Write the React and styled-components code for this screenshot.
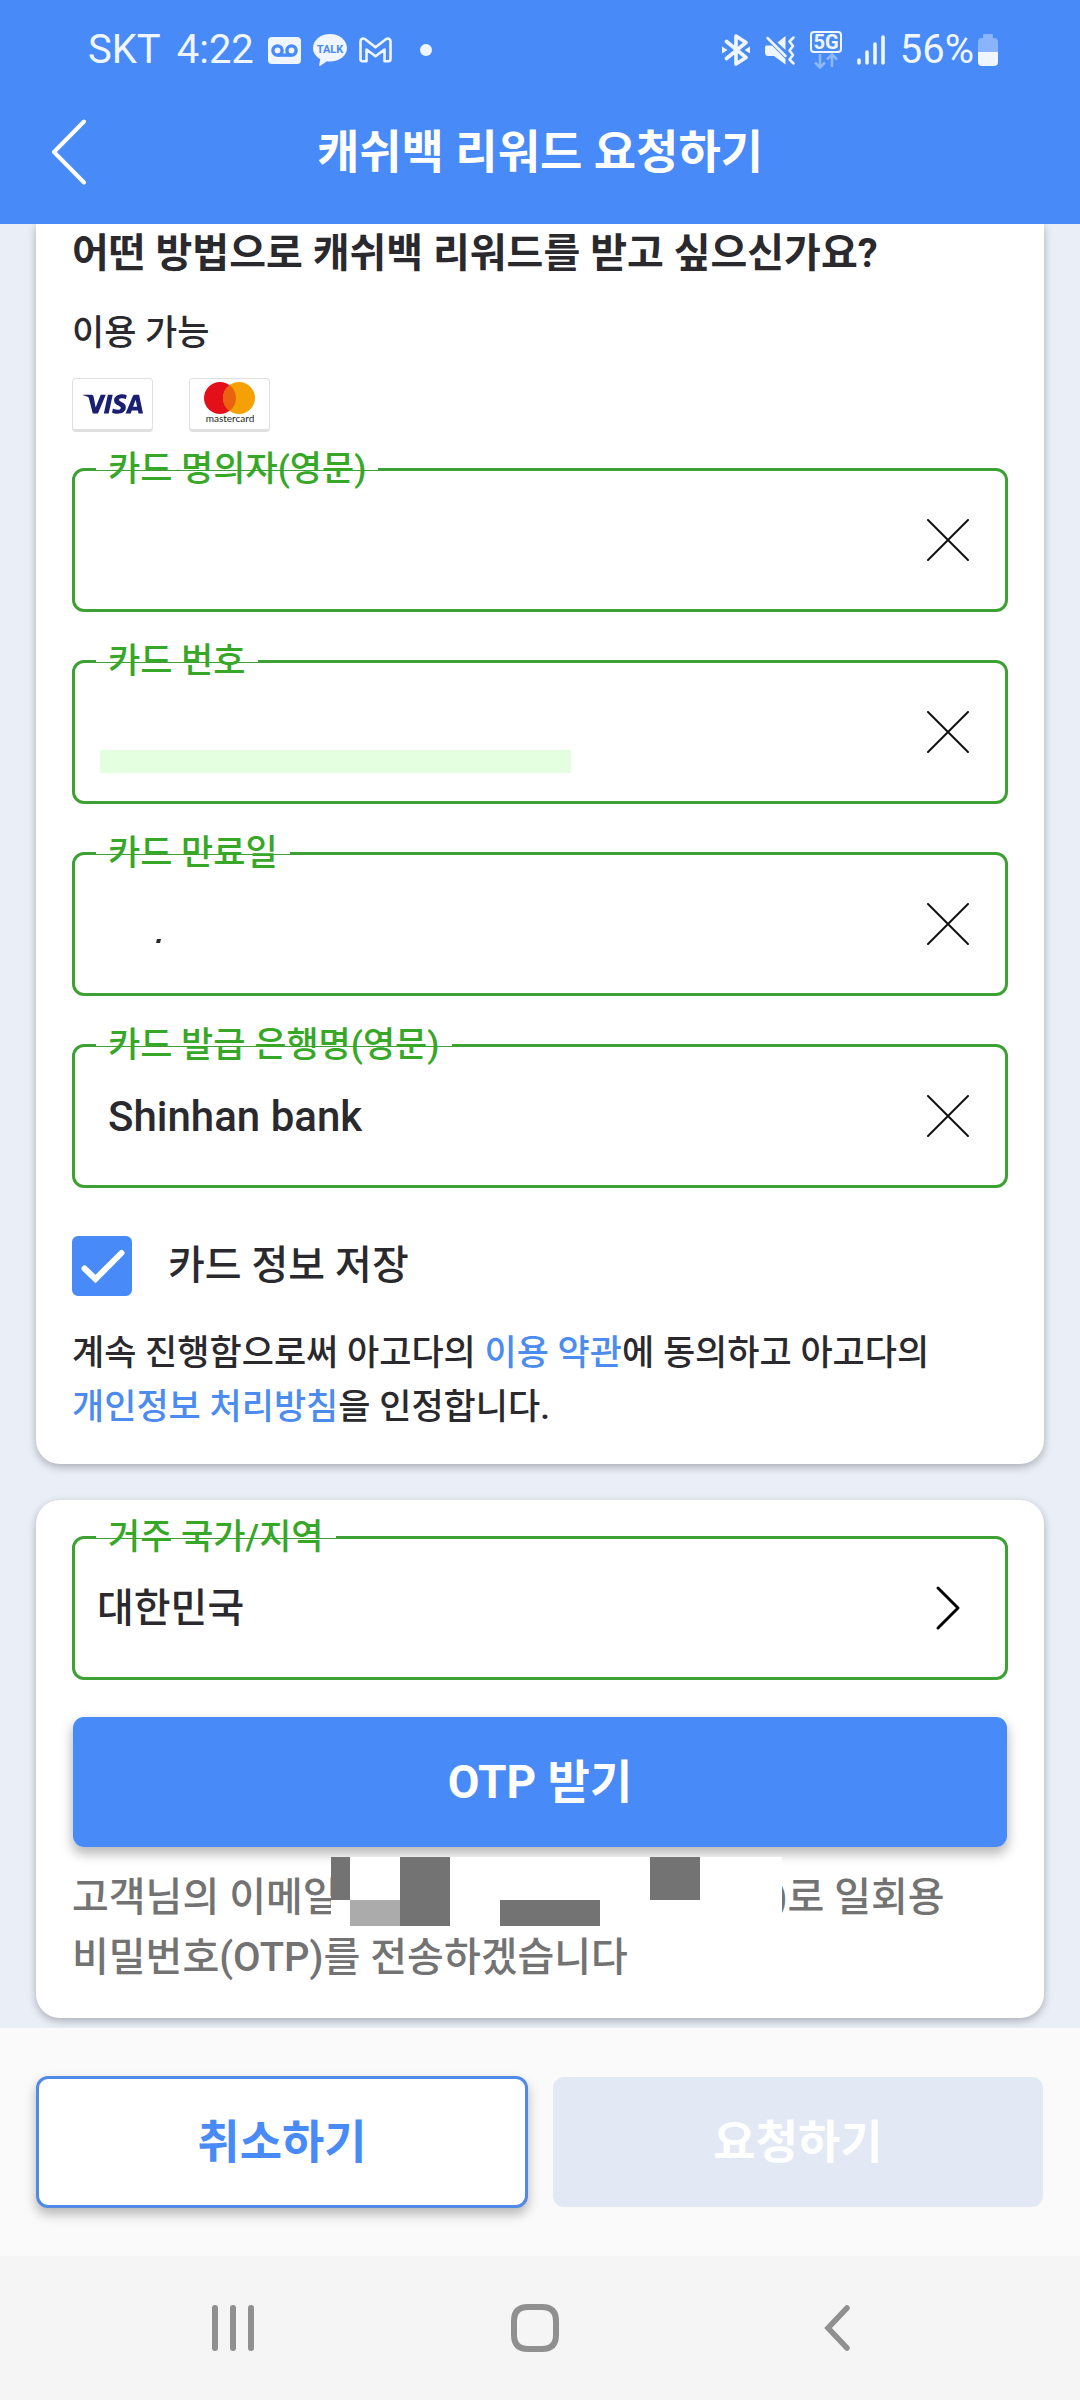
import React, { useState } from 'react';
import styled, { createGlobalStyle, css } from 'styled-components';
import { SiVisa } from 'react-icons/si';

const colors = {
  blue: '#488af8',
  green: '#3da133',
  text: '#2a292e',
  muted: '#737373',
  page: '#eaeef7',
  status: '#f0f6ff',
};

const GlobalStyle = createGlobalStyle`
  * {
    box-sizing: border-box;
  }

  body {
    margin: 0;
    background: ${colors.page};
    color: ${colors.text};
    font-family: Roboto, 'Noto Sans CJK KR', sans-serif;
  }

  button,
  input,
  select {
    margin: 0;
    font-family: inherit;
    color: inherit;
  }
`;

const Page = styled.div`
  min-height: 100vh;
  display: flex;
  flex-direction: column;
`;

const Header = styled.header`
  background: ${colors.blue};
  color: #fff;
`;

const StatusBar = styled.div`
  display: flex;
  justify-content: space-between;
  align-items: center;
  height: 100px;
  padding: 0 82px 0 88px;
  color: ${colors.status};
  font-size: 40px;
  line-height: 48px;

  svg {
    display: block;
  }
`;

const StatusGroup = styled.div`
  display: flex;
  align-items: center;
  gap: ${({ $gap }) => $gap}px;
`;

const Clock = styled.span`
  margin: 0 2px 0 4px;
`;

const Battery = styled.div`
  display: flex;
  align-items: center;
  gap: 4px;
`;

const TitleBar = styled.div`
  display: grid;
  grid-template-columns: 88px 1fr 88px;
  align-items: center;
  height: 124px;
  padding-bottom: 20px;
`;

const IconButton = styled.button`
  display: flex;
  align-items: center;
  justify-content: center;
  padding: 0;
  border: none;
  background: none;
  cursor: pointer;
`;

const BackButton = styled(IconButton)`
  justify-content: flex-end;
  height: 88px;
`;

const Title = styled.h1`
  margin: 0;
  text-align: center;
  font-size: 46px;
  line-height: 64px;
  font-weight: 700;
`;

const Main = styled.main`
  flex: 1;
  display: flex;
  flex-direction: column;
  gap: 36px;
  padding: 0 36px 10px;
  overflow: hidden;
`;

const Card = styled.section`
  padding: ${({ $continued }) => ($continued ? '2px 36px 29px' : '36px 36px 30px')};
  border-radius: ${({ $continued }) => ($continued ? '0 0 24px 24px' : '24px')};
  background: #fff;
  box-shadow: 0 3px 8px rgba(0, 0, 0, 0.28);
`;

const Question = styled.h2`
  margin: 0 0 28px;
  font-size: 40px;
  line-height: 56px;
  font-weight: 700;
`;

const Available = styled.p`
  margin: 0 0 20px;
  font-size: 35px;
  line-height: 48px;
  font-weight: 500;
`;

const Brands = styled.div`
  display: flex;
  gap: 36px;
  margin-bottom: 36px;
`;

const Brand = styled.div`
  display: flex;
  align-items: center;
  justify-content: center;
  width: 81px;
  height: 54px;
  border: 1px solid #e0e0e0;
  border-bottom-width: 3px;
  border-radius: 4px;
  background: #fff;
`;

const Fields = styled.div`
  display: flex;
  flex-direction: column;
  gap: 48px;
`;

const FieldBox = styled.div`
  position: relative;
  display: flex;
  align-items: center;
  height: 144px;
  border: 3px solid ${colors.green};
  border-radius: 12px;
`;

/* the white strip leaves a one pixel hairline of the border under the label */
const FieldLabel = styled.label`
  position: absolute;
  top: -25px;
  left: 21px;
  padding: 0 12px;
  background: linear-gradient(#fff, #fff) no-repeat 0 22px / 100% 2px;
  color: #37a728;
  font-size: 35px;
  line-height: 48px;
  font-weight: 500;
  white-space: nowrap;
`;

const control = css`
  flex: 1;
  min-width: 0;
  height: 100%;
  border: none;
  outline: none;
  background: transparent;
  font-weight: 500;
`;

const TextInput = styled.input`
  ${control}
  padding: 0 0 0 33px;
  font-size: 42px;
`;

const CountrySelect = styled.select`
  ${control}
  appearance: none;
  padding: 0 96px 0 22px;
  font-size: 40px;
`;

const ClearButton = styled(IconButton)`
  width: 114px;
  height: 100%;
`;

const SelectArrow = styled.svg`
  position: absolute;
  right: 44px;
  top: 46px;
  pointer-events: none;
`;

const NumberMask = styled.span`
  position: absolute;
  left: 25px;
  bottom: 28px;
  width: 471px;
  height: 23px;
  background: #e3ffdf;
`;

const ExpiryMask = styled.svg`
  position: absolute;
  left: 81px;
  bottom: 50px;
`;

const SaveRow = styled.div`
  display: flex;
  align-items: center;
  gap: 36px;
  margin: 48px 0 31px;
`;

const SaveLabel = styled.label`
  font-size: 40px;
  line-height: 60px;
  font-weight: 500;
`;

const CheckBox = styled.span`
  position: relative;
  width: 60px;
  height: 60px;

  svg {
    position: absolute;
    inset: 0;
    pointer-events: none;
  }
`;

const CheckInput = styled.input`
  appearance: none;
  display: block;
  width: 60px;
  height: 60px;
  border: 3px solid ${colors.blue};
  border-radius: 6px;

  &:checked {
    background: ${colors.blue};
  }
`;

const Terms = styled.p`
  margin: 0;
  font-size: 35px;
  line-height: 54px;
  font-weight: 500;
  word-break: keep-all;
`;

const TermsLink = styled.a`
  color: #4c8bf0;
  text-decoration: none;
`;

const Button = styled.button`
  width: 100%;
  height: 132px;
  border: 1px solid transparent;
  border-radius: 12px;
  background: ${colors.blue} padding-box;
  color: #fff;
  font-size: 46px;
  line-height: 64px;
  font-weight: 700;
  box-shadow: 0 6px 12px rgba(0, 0, 0, 0.28);
  cursor: pointer;

  &:disabled {
    background: #e2e8f4 padding-box;
    box-shadow: none;
    cursor: default;
  }
`;

const OtpButton = styled(Button)`
  margin: 36px 0 20px;
`;

const CancelButton = styled(Button)`
  border: 3px solid #518ae6;
  background: #fff;
  color: ${colors.blue};
`;

const OtpNote = styled.p`
  margin: 0;
  color: ${colors.muted};
  font-size: 40px;
  line-height: 60px;
  font-weight: 500;
  word-break: keep-all;
`;

const HiddenEmail = styled.span`
  position: relative;
  display: inline-block;
  width: 434px;
  height: 60px;
  vertical-align: bottom;

  svg {
    position: absolute;
    left: -9px;
    bottom: 2px;
  }
`;

const Actions = styled.footer`
  display: grid;
  grid-template-columns: 1fr 1fr;
  gap: 24px;
  padding: 48px 36px;
  background: #fafafa;
`;

const NavBar = styled.nav`
  display: grid;
  grid-template-columns: repeat(3, 1fr);
  height: 144px;
  padding: 0 92px 0 82px;
  background: #f5f5f5;
`;

const StatusIcons = () => (
  <>
    <svg width="33" height="27" viewBox="0 0 33 27">
      <rect width="33" height="27" rx="4" fill={colors.status} />
      <g fill="none" stroke={colors.blue} strokeWidth="3.4">
        <circle cx="9.500" cy="13.500" r="4.600" />
        <circle cx="23.500" cy="13.500" r="4.600" />
        <path d="M9.500 18.100H23.500" />
      </g>
    </svg>
    <svg width="34" height="32" viewBox="0 0 34 32">
      <path d="M17 0C26.400 0 34 6.200 34 14S26.400 27.500 17 27.500Q15.500 27.500 14 27.300L7 32Q5.800 32 6.200 30.800L7.300 25.200C3 22.800 0 18.700 0 14 0 6.200 7.600 0 17 0Z" fill={colors.status} />
      <text x="17" y="18.500" textAnchor="middle" fontSize="11" fontWeight="700" fill={colors.blue}>TALK</text>
    </svg>
    <svg width="33" height="26" viewBox="0 0 33 26">
      <path
        d="M1.500 22V4.200C1.500 1.600 4.300.700 6.200 2.200L16.500 10.300 26.800 2.200C28.700.700 31.500 1.600 31.500 4.200V22Q31.500 24.300 29.500 24.300H25.500V12.500L16.500 19.300 7.500 12.500V24.300H3.500Q1.500 24.300 1.500 22Z"
        fill="none"
        stroke={colors.status}
        strokeWidth="2.600"
        strokeLinejoin="round"
      />
    </svg>
    <svg width="28" height="12" viewBox="0 0 28 12">
      <circle cx="22" cy="6" r="6" fill={colors.status} />
    </svg>
  </>
);

const BluetoothIcon = () => (
  <svg width="28" height="32" viewBox="0 0 28 32">
    <g fill="none" stroke={colors.status} strokeWidth="3.600" strokeLinecap="round" strokeLinejoin="round">
      <path d="M4.500 7.500L24 23.500 14 30V2L24 8.500 4.500 24.500" />
    </g>
    <path d="M0 12.500L5.500 16 0 19.500ZM28 12.500L22.500 16 28 19.500Z" fill={colors.status} />
  </svg>
);

const VibrateIcon = () => (
  <svg width="30" height="29" viewBox="0 0 30 29">
    <path d="M1 9.500H7L20.500 23V28.500L9 20H3.500Q0 20 0 16.500V12Q0 9.500 1 9.500ZM12.500 6.500L20.500 0V14Z" fill={colors.status} />
    <g fill="none" stroke={colors.status} strokeWidth="2.500" strokeLinecap="round" strokeLinejoin="round">
      <path d="M2.500 2L20.500 20" />
      <path d="M28.500 1.500L24.500 5.500 28 10 24.500 14.500 28 19 24.500 23.500 28.500 27.500" />
    </g>
  </svg>
);

const NetworkIcon = () => (
  <svg width="32" height="38" viewBox="0 0 32 38">
    <rect x="1" y="1" width="30" height="20" rx="3" fill="none" stroke={colors.status} strokeWidth="2" />
    <text x="16" y="18" textAnchor="middle" fontSize="20" fontWeight="700" fill={colors.status}>5G</text>
    <path
      d="M10 23V36M5 31.500L10 36.500 15 31.500M22 36V23M17 28.500L22 23.500 27 28.500"
      fill="none"
      stroke="#8fb8fc"
      strokeWidth="2.500"
    />
  </svg>
);

const SignalIcon = () => (
  <svg width="28" height="30" viewBox="0 0 28 30">
    <path
      d="M2 25V28M10 17V28M18 9V28M26 2V28"
      stroke={colors.status}
      strokeWidth="3.600"
      strokeLinecap="round"
    />
  </svg>
);

const BatteryIcon = () => (
  <svg width="20" height="32" viewBox="0 0 20 32">
    <path d="M5 4V1.500Q5 0 6.500 0H13.500Q15 0 15 1.500V4H16Q20 4 20 8V18H0V8Q0 4 4 4Z" fill="#8ab4fc" />
    <path d="M0 18H20V28Q20 32 16 32H4Q0 32 0 28Z" fill={colors.status} />
  </svg>
);

const MastercardLogo = () => (
  <svg width="56" height="46" viewBox="0 0 56 46" role="img" aria-label="Mastercard">
    <circle cx="18" cy="17" r="16" fill="#e30f19" />
    <circle cx="37" cy="17" r="16" fill="#f5a104" />
    <path d="M27.500 4.100A16 16 0 0 1 27.500 29.900A16 16 0 0 1 27.500 4.100Z" fill="#ea620f" />
    <text x="28" y="41" textAnchor="middle" fontFamily="Lato" fontSize="10" fill="#231f20">
      mastercard
    </text>
  </svg>
);

const EmailMosaic = () => (
  <svg width="451" height="69" viewBox="0 0 451 69">
    <rect width="451" height="69" fill="#fff" />
    <path d="M0 0H19V43H0ZM69 0H119V69H69ZM169 43H269V69H169ZM319 0H369V43H319Z" fill={colors.muted} />
    <path d="M19 43H69V69H19Z" fill="#ababab" />
  </svg>
);

const Field = ({ id, label, value, onChange, children }) => (
  <FieldBox>
    <FieldLabel htmlFor={id}>{label}</FieldLabel>
    <TextInput id={id} type="text" value={value} onChange={(e) => onChange(id, e.target.value)} />
    {children}
    <ClearButton type="button" aria-label={`${label} 지우기`} onClick={() => onChange(id, '')}>
      <svg width="42" height="42" viewBox="0 0 42 42">
        <path d="M1 1L41 41M41 1L1 41" stroke="#111" strokeWidth="2" strokeLinecap="round" />
      </svg>
    </ClearButton>
  </FieldBox>
);

const App = () => {
  const [card, setCard] = useState({ holder: '', number: '', expiry: '', bank: 'Shinhan bank' });
  const [save, setSave] = useState(true);

  const handleChange = (id, value) => {
    setCard({ ...card, [id]: value });
  };

  return (
    <Page>
      <GlobalStyle />
      <Header>
        <StatusBar>
          <StatusGroup $gap={12}>
            <span>SKT</span>
            <Clock>4:22</Clock>
            <StatusIcons />
          </StatusGroup>
          <StatusGroup $gap={15}>
            <BluetoothIcon />
            <VibrateIcon />
            <NetworkIcon />
            <SignalIcon />
            <Battery>
              <span>56%</span>
              <BatteryIcon />
            </Battery>
          </StatusGroup>
        </StatusBar>
        <TitleBar>
          <BackButton type="button" aria-label="뒤로">
            <svg width="36" height="66" viewBox="0 0 36 66">
              <path d="M32 2.500L2 33 32 63.500" fill="none" stroke="#fff" strokeWidth="4" strokeLinecap="round" strokeLinejoin="round" />
            </svg>
          </BackButton>
          <Title>캐쉬백 리워드 요청하기</Title>
        </TitleBar>
      </Header>

      <Main>
        <Card $continued>
          <Question>어떤 방법으로 캐쉬백 리워드를 받고 싶으신가요?</Question>
          <Available>이용 가능</Available>
          <Brands>
            <Brand>
              <SiVisa size={60} color="#1a1f71" title="Visa" />
            </Brand>
            <Brand>
              <MastercardLogo />
            </Brand>
          </Brands>
          <Fields>
            <Field id="holder" label="카드 명의자(영문)" value={card.holder} onChange={handleChange} />
            <Field id="number" label="카드 번호" value={card.number} onChange={handleChange}>
              <NumberMask />
            </Field>
            <Field id="expiry" label="카드 만료일" value={card.expiry} onChange={handleChange}>
              <ExpiryMask width="5" height="4" viewBox="0 0 5 4">
                <path d="M1 0H5L4 4H0Z" fill={colors.text} />
              </ExpiryMask>
            </Field>
            <Field id="bank" label="카드 발급 은행명(영문)" value={card.bank} onChange={handleChange} />
          </Fields>
          <SaveRow>
            <CheckBox>
              <CheckInput id="save" type="checkbox" checked={save} onChange={(e) => setSave(e.target.checked)} />
              {save && (
                <svg width="60" height="60" viewBox="0 0 60 60">
                  <path d="M12.500 32.500L23.500 43 49.500 17" fill="none" stroke="#fff" strokeWidth="6" strokeLinecap="round" />
                </svg>
              )}
            </CheckBox>
            <SaveLabel htmlFor="save">카드 정보 저장</SaveLabel>
          </SaveRow>
          <Terms>
            계속 진행함으로써 아고다의 <TermsLink href="#terms">이용 약관</TermsLink>에 동의하고 아고다의{' '}
            <TermsLink href="#privacy">개인정보 처리방침</TermsLink>을 인정합니다.
          </Terms>
        </Card>

        <Card>
          <FieldBox>
            <FieldLabel htmlFor="country">거주 국가/지역</FieldLabel>
            <CountrySelect id="country" defaultValue="KR">
              <option value="KR">대한민국</option>
            </CountrySelect>
            <SelectArrow width="26" height="46" viewBox="0 0 26 46">
              <path d="M3 3L23 23 3 43" fill="none" stroke="#000" strokeWidth="3" strokeLinecap="round" strokeLinejoin="round" />
            </SelectArrow>
          </FieldBox>
          <OtpButton type="button">OTP 받기</OtpButton>
          <OtpNote>
            고객님의 이메일
            <HiddenEmail>
              <EmailMosaic />
            </HiddenEmail>
            )로 일회용 비밀번호(OTP)를 전송하겠습니다
          </OtpNote>
        </Card>
      </Main>

      <Actions>
        <CancelButton type="button">취소하기</CancelButton>
        <Button type="button" disabled>요청하기</Button>
      </Actions>

      <NavBar>
        <IconButton type="button" aria-label="최근 앱">
          <svg width="42" height="46" viewBox="0 0 42 46">
            <path d="M3 3V43M21 3V43M39 3V43" stroke="#909090" strokeWidth="6" strokeLinecap="round" />
          </svg>
        </IconButton>
        <IconButton type="button" aria-label="홈">
          <svg width="48" height="48" viewBox="0 0 48 48">
            <path
              d="M17 3H31Q45 3 45 17V31Q45 45 31 45H17Q3 45 3 31V17Q3 3 17 3Z"
              fill="none"
              stroke="#909090"
              strokeWidth="6"
            />
          </svg>
        </IconButton>
        <IconButton type="button" aria-label="뒤로 가기">
          <svg width="26" height="46" viewBox="0 0 26 46">
            <path d="M23 3L4 23 23 43" fill="none" stroke="#909090" strokeWidth="5.500" strokeLinecap="round" />
          </svg>
        </IconButton>
      </NavBar>
    </Page>
  );
};

export default App;
